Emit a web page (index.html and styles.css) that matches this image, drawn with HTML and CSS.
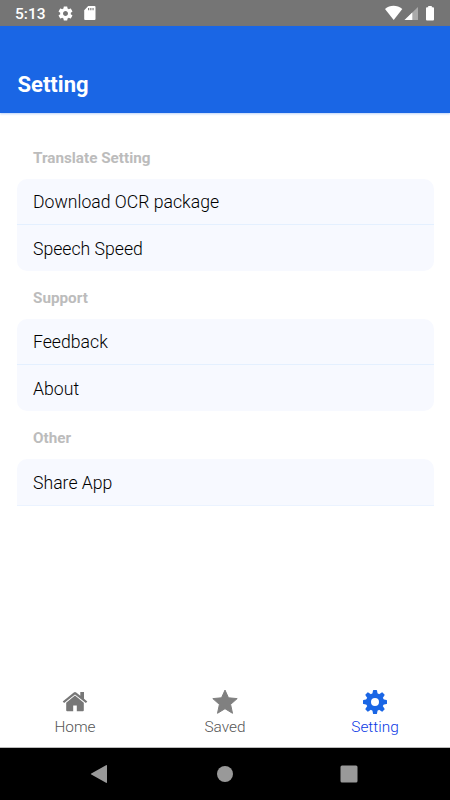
FILE: index.html
```html
<!DOCTYPE html>
<html lang="en">
<head>
    <meta charset="UTF-8">
    <meta name="viewport" content="width=device-width, initial-scale=1.0">
    <title>Setting</title>
    <link rel="stylesheet" href="styles.css">
</head>
<body>
    <div class="status-bar">
        <span class="time">5:13</span>
        <svg class="status-gear" width="17" height="17" viewBox="0 0 24 24" fill="#fff">
            <path d="M19.43 12.98c.04-.32.07-.64.07-.98s-.03-.66-.07-.98l2.11-1.65c.19-.15.24-.42.12-.64l-2-3.46c-.12-.22-.39-.3-.61-.22l-2.49 1c-.52-.4-1.08-.73-1.69-.98l-.38-2.65C14.46 2.18 14.25 2 14 2h-4c-.25 0-.46.18-.49.42l-.38 2.65c-.61.25-1.17.59-1.69.98l-2.49-1c-.23-.09-.49 0-.61.22l-2 3.46c-.13.22-.07.49.12.64l2.11 1.65c-.04.32-.07.65-.07.98s.03.66.07.98l-2.11 1.65c-.19.15-.24.42-.12.64l2 3.46c.12.22.39.3.61.22l2.49-1c.52.4 1.08.73 1.69.98l.38 2.65c.03.24.24.42.49.42h4c.25 0 .46-.18.49-.42l.38-2.65c.61-.25 1.17-.59 1.69-.98l2.49 1c.23.09.49 0 .61-.22l2-3.46c.12-.22.07-.49-.12-.64l-2.11-1.65zM12 15.5c-1.93 0-3.5-1.57-3.5-3.5s1.57-3.5 3.5-3.5 3.5 1.57 3.5 3.5-1.57 3.5-3.5 3.5z"/>
        </svg>
        <svg class="status-card" width="12" height="14" viewBox="0 0 12 14">
            <path fill="#fff" d="M4.2 0H10.5Q11.5 0 11.5 1V13Q11.5 14 10.5 14H1.2Q.2 14 .2 13V4.2z"/>
            <path fill="#757575" d="M4.1 2h1.1v2.3H4.1zM6.3 2h1.1v2.3H6.3zM8.5 2h1.1v2.3H8.5z"/>
        </svg>
        <svg class="status-signal" width="52" height="16" viewBox="0 0 52 16">
            <path fill="#fff" d="M0 4C5-.2 12-.2 17.3 4L8.7 15z"/>
            <path fill="#aaa" d="M33 2V15H19.5z"/>
            <path fill="#fff" d="M27.3 7.5V15h-7.8z"/>
            <path fill="#fff" d="M43.2 1h3.6v1.3H48q1 0 1 1v11.2q0 1-1 1h-6q-1 0-1-1V3.3q0-1 1-1h1.2z"/>
        </svg>
    </div>

    <div class="header">
        <h1>Setting</h1>
    </div>

    <div class="content">
        <h2>Translate Setting</h2>
        <ul class="card">
            <li>Download OCR package</li>
            <li>Speech Speed</li>
        </ul>
        <h2>Support</h2>
        <ul class="card">
            <li>Feedback</li>
            <li>About</li>
        </ul>
        <h2>Other</h2>
        <ul class="card open">
            <li>Share App</li>
        </ul>
    </div>

    <div class="tabs">
        <div class="tab">
            <svg width="26" height="26" viewBox="0 0 26 26" fill="#777">
                <path d="M13 6.6L4.2 13.800V21.300q0 1 1 1h6V16.500h3.600v5.800h6q1 0 1-1v-7.500z"/>
                <path d="M14.2 3.400q-1.200-.9-2.400 0L.7 12.500l1.400 1.600L13 5.500l10.900 8.600 1.400-1.600-3.300-2.700V3h-3.700v3.800z"/>
            </svg>
            <span>Home</span>
        </div>
        <div class="tab">
            <svg width="26" height="26" viewBox="0 0 26 26" fill="#808080" stroke="#808080" stroke-width="1" stroke-linejoin="round">
                <path d="M13 1.1l3.5 7.7 8.7.8-6.6 5.8 1.9 8.9-7.5-4.6-7.5 4.6 1.9-8.9L.8 9.6l8.7-.8z"/>
            </svg>
            <span>Saved</span>
        </div>
        <div class="tab active">
            <svg width="26" height="26" viewBox="0 0 26 26">
                <circle cx="13" cy="13" r="6.5" fill="none" stroke="#1a66e5" stroke-width="5"/>
                <g fill="#1a66e5">
                    <path id="tooth" d="M10.3 5L11 1.5q.1-.5.6-.5h2.8q.5 0 .6.5L15.7 5z"/>
                    <use href="#tooth" transform="rotate(45 13 13)"/>
                    <use href="#tooth" transform="rotate(90 13 13)"/>
                    <use href="#tooth" transform="rotate(135 13 13)"/>
                    <use href="#tooth" transform="rotate(180 13 13)"/>
                    <use href="#tooth" transform="rotate(225 13 13)"/>
                    <use href="#tooth" transform="rotate(270 13 13)"/>
                    <use href="#tooth" transform="rotate(315 13 13)"/>
                </g>
            </svg>
            <span>Setting</span>
        </div>
    </div>

    <div class="nav-bar">
        <svg width="18" height="18" viewBox="0 0 18 18"><path fill="#999" d="M1.3 8.4L16 .2q1-.5 1 .6v16.4q0 1.100-1 .6L1.300 9.600q-.9-.6 0-1.200z"/></svg>
        <svg width="18" height="18" viewBox="0 0 18 18"><circle cx="9" cy="9" r="8" fill="#999"/></svg>
        <svg width="18" height="18" viewBox="0 0 18 18"><rect x=".5" y=".5" width="17" height="17" rx="1.5" fill="#999"/></svg>
    </div>
</body>
</html>
```
FILE: styles.css
```css
* {
    box-sizing: border-box;
}
body {
    font-family: Roboto, sans-serif;
    margin: 0;
    height: 800px;
    background-color: #ffffff;
    color: #000;
    display: flex;
    flex-direction: column;
    overflow: hidden;
}
svg {
    display: block;
    flex: none;
}
.status-bar {
    height: 26px;
    background: #757575;
    color: #fff;
    display: flex;
    align-items: center;
    padding: 0 13px 0 15px;
}
.time {
    width: 42px;
    font-size: 15.5px;
    font-weight: 500;
    line-height: 26px;
    padding-top: 2px;
}
.status-card {
    margin-left: 10px;
}
.status-signal {
    margin-left: auto;
}
.header {
    height: 87px;
    background: #1a66e5;
    color: #fff;
    padding: 45px 17.5px 0;
    box-shadow: 0 1px 2px rgba(26, 102, 229, 0.3);
}
h1 {
    margin: 0;
    font-size: 22px;
    line-height: 28px;
    font-weight: bold;
}
.content {
    flex: 1;
    padding: 31px 16px 0 16.5px;
}
h2 {
    margin: 0;
    height: 35px;
    padding-left: 16.5px;
    font-size: 15.25px;
    line-height: 28px;
    font-weight: bold;
    color: #bcbcbc;
}
.card {
    list-style: none;
    margin: 0 0 13.6px;
    padding: 0;
    height: 91.6px;
    background: #f7f9ff;
    border-radius: 10px;
    overflow: hidden;
}
.card li {
    height: 46px;
    padding-left: 16.5px;
    font-size: 17.65px;
    font-weight: 300;
    line-height: 47px;
    border-bottom: 1px solid #e4f0ff;
}
.card li:last-child {
    line-height: 48px;
    border-bottom: none;
}
.card.open {
    height: 47px;
    border-radius: 10px 10px 0 0;
}
.card.open li {
    height: 47px;
    border-bottom: 1px solid #ebf3ff;
}
.tabs {
    height: 66px;
    display: flex;
    border-bottom: 1px solid #bbb;
}
.tab {
    flex: 1;
    display: flex;
    flex-direction: column;
    align-items: center;
    padding-top: 7px;
    color: #555;
    font-size: 15.4px;
    font-weight: 300;
    line-height: 25px;
}
.tab.active {
    color: #0a38e5;
}
.nav-bar {
    height: 52px;
    background: #000;
    display: flex;
    align-items: center;
    justify-content: space-between;
    padding: 0 92px 0 90px;
}
.nav-bar svg:nth-child(2) {
    margin-left: 1px;
}
```
